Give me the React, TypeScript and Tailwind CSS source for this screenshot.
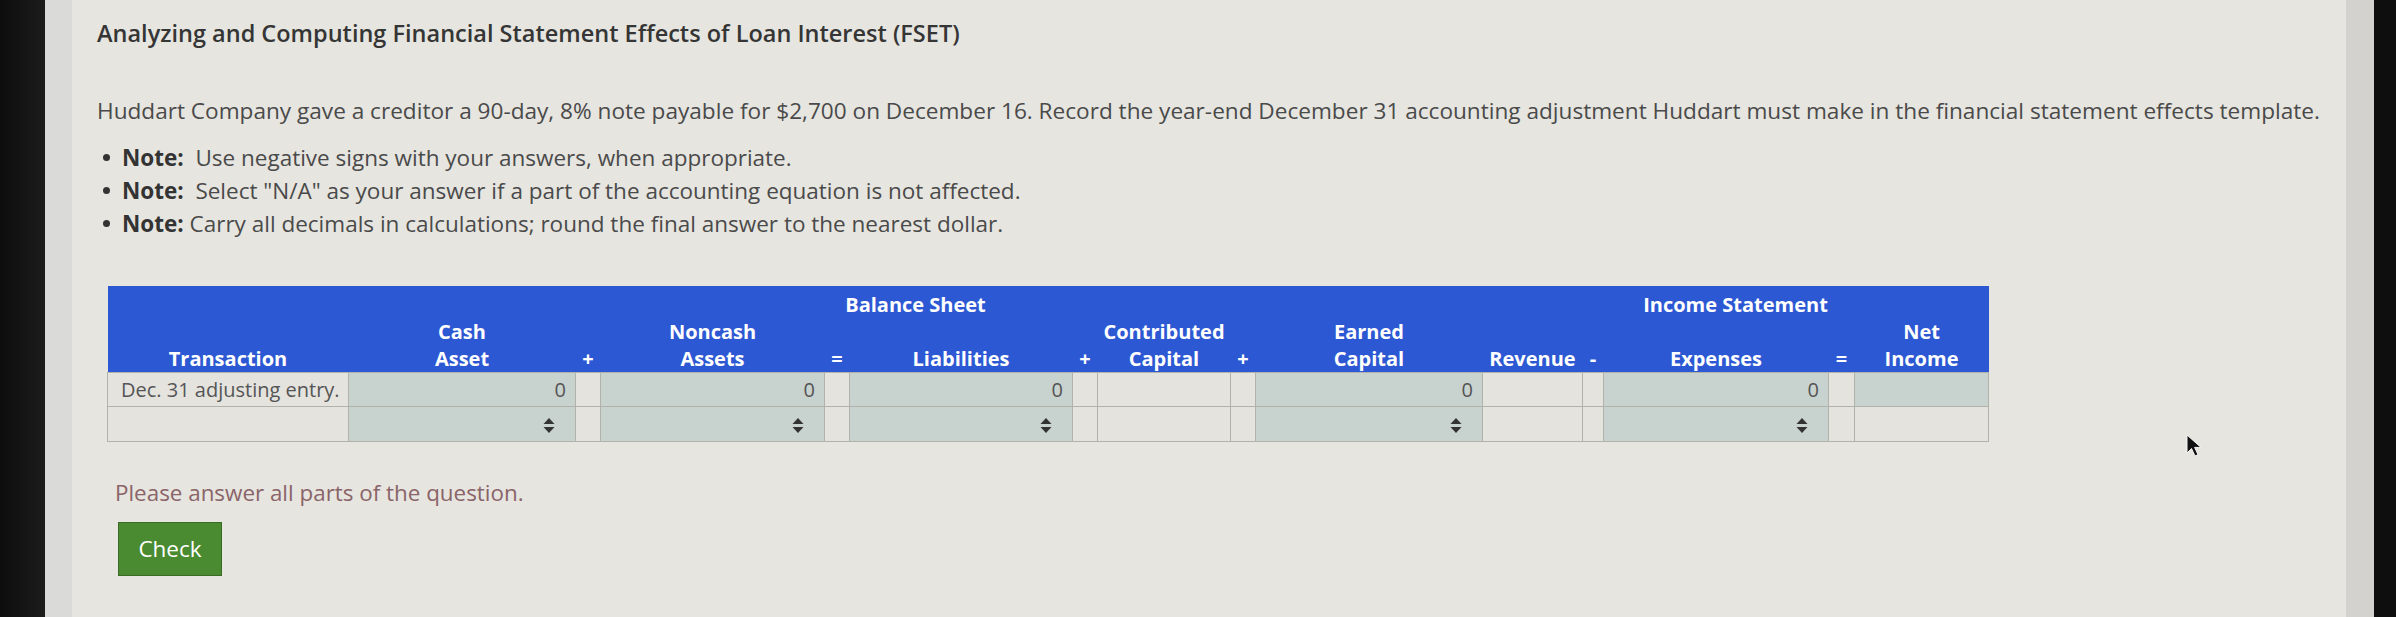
import React from "react";

const Spinner = () => (
  <svg width="12" height="15" viewBox="0 0 12 15" className="inline-block">
    <path d="M6 0 L11.5 6 L0.5 6 Z" fill="#333" />
    <path d="M6 15 L11.5 9 L0.5 9 Z" fill="#333" />
  </svg>
);

const shaded = "bg-[#c8d2cf]";
const cream = "bg-[#e4e3de]";
const td = "border border-[#b2b2ad] p-0";

export default function App() {
  return (
    <div className="relative flex w-[2396px] h-[617px] overflow-hidden bg-black font-['Open_Sans',sans-serif]">
      <div className="w-[45px] h-full bg-gradient-to-r from-[#0d0d0d] to-[#1c1c1c]" />
      <div className="w-[27px] h-full bg-[#dadad8]" />
      <div className="flex-1 h-full bg-[#e6e5e0] pl-[25px] pt-[18px]">
        <h1 className="text-[23.5px] leading-[30px] font-semibold text-[#353535]">
          Analyzing and Computing Financial Statement Effects of Loan Interest (FSET)
        </h1>
        <p className="mt-[48px] text-[22.6px] leading-[30px] text-[#4a4a4a]">
          Huddart Company gave a creditor a 90-day, 8% note payable for $2,700 on December 16. Record the year-end December 31 accounting adjustment Huddart must make in the financial statement effects template.
        </p>
        <ul className="mt-[15px] text-[22.5px] leading-[33px] text-[#4a4a4a]">
          <li className="flex items-center">
            <span className="ml-[6px] w-[7px] h-[7px] rounded-full bg-[#333]" />
            <span className="ml-[12px]"><b className="font-bold text-[#333]">Note:</b>&nbsp; Use negative signs with your answers, when appropriate.</span>
          </li>
          <li className="flex items-center">
            <span className="ml-[6px] w-[7px] h-[7px] rounded-full bg-[#333]" />
            <span className="ml-[12px]"><b className="font-bold text-[#333]">Note:</b>&nbsp; Select "N/A" as your answer if a part of the accounting equation is not affected.</span>
          </li>
          <li className="flex items-center">
            <span className="ml-[6px] w-[7px] h-[7px] rounded-full bg-[#333]" />
            <span className="ml-[12px]"><b className="font-bold text-[#333]">Note:</b> Carry all decimals in calculations; round the final answer to the nearest dollar.</span>
          </li>
        </ul>

        <table className="mt-[46px] ml-[10px] table-fixed border-collapse w-[1881px]">
          <colgroup>
            <col className="w-[241px]" />
            <col className="w-[227px]" />
            <col className="w-[25px]" />
            <col className="w-[224px]" />
            <col className="w-[25px]" />
            <col className="w-[223px]" />
            <col className="w-[25px]" />
            <col className="w-[133px]" />
            <col className="w-[25px]" />
            <col className="w-[227px]" />
            <col className="w-[100px]" />
            <col className="w-[21px]" />
            <col className="w-[225px]" />
            <col className="w-[26px]" />
            <col className="w-[134px]" />
          </colgroup>
          <thead className="bg-[#2c58d3] text-white font-bold text-[20px] leading-[27px]">
            <tr className="h-[32px]">
              <th rowSpan={2} className="align-bottom p-0 font-bold">Transaction</th>
              <th colSpan={9} className="align-top pt-[5px] p-0 font-bold">Balance Sheet</th>
              <th colSpan={5} className="align-top pt-[5px] p-0 font-bold">Income Statement</th>
            </tr>
            <tr className="h-[54px]">
              <th className="align-bottom p-0 font-bold">Cash<br />Asset</th>
              <th className="align-bottom p-0 font-bold">+</th>
              <th className="align-bottom p-0 font-bold">Noncash<br />Assets</th>
              <th className="align-bottom p-0 font-bold">=</th>
              <th className="align-bottom p-0 font-bold">Liabilities</th>
              <th className="align-bottom p-0 font-bold">+</th>
              <th className="align-bottom p-0 font-bold">Contributed<br />Capital</th>
              <th className="align-bottom p-0 font-bold">+</th>
              <th className="align-bottom p-0 font-bold">Earned<br />Capital</th>
              <th className="align-bottom p-0 font-bold">Revenue</th>
              <th className="align-bottom p-0 font-bold">-</th>
              <th className="align-bottom p-0 font-bold">Expenses</th>
              <th className="align-bottom p-0 font-bold">=</th>
              <th className="align-bottom p-0 font-bold">Net<br />Income</th>
            </tr>
          </thead>
          <tbody className="text-[20px] text-[#555]">
            <tr className="h-[34px]">
              <td className={`${td} ${cream} pl-[13px] text-left whitespace-nowrap`}>Dec. 31 adjusting entry.</td>
              <td className={`${td} ${shaded} text-right pr-[9px]`}>0</td>
              <td className={`${td} ${cream}`} />
              <td className={`${td} ${shaded} text-right pr-[9px]`}>0</td>
              <td className={`${td} ${cream}`} />
              <td className={`${td} ${shaded} text-right pr-[9px]`}>0</td>
              <td className={`${td} ${cream}`} />
              <td className={`${td} ${cream}`} />
              <td className={`${td} ${cream}`} />
              <td className={`${td} ${shaded} text-right pr-[9px]`}>0</td>
              <td className={`${td} ${cream}`} />
              <td className={`${td} ${cream}`} />
              <td className={`${td} ${shaded} text-right pr-[9px]`}>0</td>
              <td className={`${td} ${cream}`} />
              <td className={`${td} ${shaded}`} />
            </tr>
            <tr className="h-[35px]">
              <td className={`${td} ${cream}`} />
              <td className={`${td} ${shaded} text-right pr-[20px]`}><Spinner /></td>
              <td className={`${td} ${cream}`} />
              <td className={`${td} ${shaded} text-right pr-[20px]`}><Spinner /></td>
              <td className={`${td} ${cream}`} />
              <td className={`${td} ${shaded} text-right pr-[20px]`}><Spinner /></td>
              <td className={`${td} ${cream}`} />
              <td className={`${td} ${cream}`} />
              <td className={`${td} ${cream}`} />
              <td className={`${td} ${shaded} text-right pr-[20px]`}><Spinner /></td>
              <td className={`${td} ${cream}`} />
              <td className={`${td} ${cream}`} />
              <td className={`${td} ${shaded} text-right pr-[20px]`}><Spinner /></td>
              <td className={`${td} ${cream}`} />
              <td className={`${td} ${cream}`} />
            </tr>
          </tbody>
        </table>

        <p className="mt-[36px] ml-[18px] text-[22.4px] leading-[30px] text-[#8a6468]">
          Please answer all parts of the question.
        </p>
        <button className="mt-[14px] ml-[21px] w-[104px] h-[54px] bg-[#4a8a30] border border-[#3a6c25] text-white text-[22.5px] leading-[30px]">
          Check
        </button>
      </div>
      <div className="w-[28px] h-full bg-[#d3d2ce]" />
      <div className="w-[22px] h-full bg-[#0e0e0e]" />

      <svg className="absolute left-[2186px] top-[434px]" width="18" height="24" viewBox="0 0 18 24">
        <path d="M1 1 L1 19 L5.5 14.5 L9 22 L12 20.6 L8.6 13.4 L15 13.4 Z" fill="#111" stroke="#f5f5f5" strokeWidth="1" />
      </svg>
    </div>
  );
}
